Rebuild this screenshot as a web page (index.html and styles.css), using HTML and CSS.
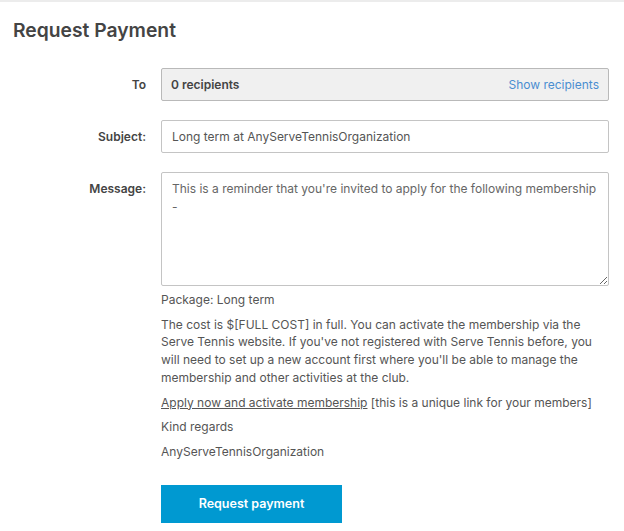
FILE: index.html
```html
<!DOCTYPE html>
<html lang="en">
<head>
<meta charset="utf-8">
<title>Request Payment</title>
<link rel="stylesheet" href="styles.css">
</head>
<body>
<main class="page">
  <h1 class="title">Request Payment</h1>
  <form class="form">
    <div class="row">
      <label class="label">To</label>
      <div class="recipients">
        <span class="recipients-count">0 recipients</span>
        <a class="recipients-link" href="#">Show recipients</a>
      </div>
    </div>
    <div class="row">
      <label class="label" for="subject">Subject:</label>
      <input class="field" id="subject" type="text" value="Long term at AnyServeTennisOrganization">
    </div>
    <div class="row">
      <label class="label" for="message">Message:</label>
      <textarea class="field area" id="message">This is a reminder that you're invited to apply for the following membership -</textarea>
    </div>
    <div class="row">
      <span></span>
      <div class="preview">
        <p>Package: Long term</p>
        <p>The cost is $[FULL COST] in full. You can activate the membership via the Serve Tennis website. If you've not registered with Serve Tennis before, you will need to set up a new account first where you'll be able to manage the membership and other activities at the club.</p>
        <p><a class="apply" href="#">Apply now and activate membership</a> [this is a unique link for your members]</p>
        <p>Kind regards</p>
        <p>AnyServeTennisOrganization</p>
        <button class="submit" type="button">Request payment</button>
      </div>
    </div>
  </form>
</main>
</body>
</html>
```

FILE: styles.css
```css
* { box-sizing: border-box; }

html, body {
  margin: 0;
  background: #fff;
}

body {
  font-family: Inter, "Noto Sans", sans-serif;
  font-size: 12px;
  color: #555;
  border-top: 2px solid #ececec;
}

.page {
  padding: 0 15px 0 13px;
}

.title {
  margin: 0;
  padding: 15px 0 0;
  font-size: 19.3px;
  line-height: 26px;
  font-weight: 600;
  color: #444;
}

.form {
  display: flex;
  flex-direction: column;
  gap: 19px;
  margin-top: 25px;
}

.row {
  display: grid;
  grid-template-columns: 133px 1fr;
  column-gap: 15px;
}

.label {
  text-align: right;
  font-weight: 600;
  color: #444;
  padding-top: 9px;
  line-height: 16px;
}

.recipients {
  display: flex;
  justify-content: space-between;
  align-items: center;
  height: 33px;
  padding: 0 9px 0 9px;
  background: #f0f0f0;
  border: 1px solid #b9b9b9;
  border-radius: 2px;
}

.recipients-count {
  font-weight: 600;
  color: #444;
}

.recipients-link {
  color: #4a8ed0;
  text-decoration: none;
}

.field {
  font: inherit;
  color: #555;
  height: 33px;
  padding: 0 10px;
  border: 1px solid #c4c4c4;
  border-radius: 2px;
  background: #fff;
  width: 100%;
}

.area {
  height: 114px;
  padding: 7px 10px;
  line-height: 18px;
  color: #666;
  resize: vertical;
}

.preview {
  margin-top: -14px;
  line-height: 17.7px;
  color: #555;
}

.preview p {
  margin: 0 0 7px;
}

.apply {
  color: #555;
  text-decoration: underline;
}

.submit {
  display: block;
  margin-top: 24px;
  width: 181px;
  height: 38px;
  border: 0;
  border-radius: 0;
  background: #0099d1;
  color: #fff;
  font: inherit;
  font-weight: 600;
  font-size: 12.5px;
}
```
